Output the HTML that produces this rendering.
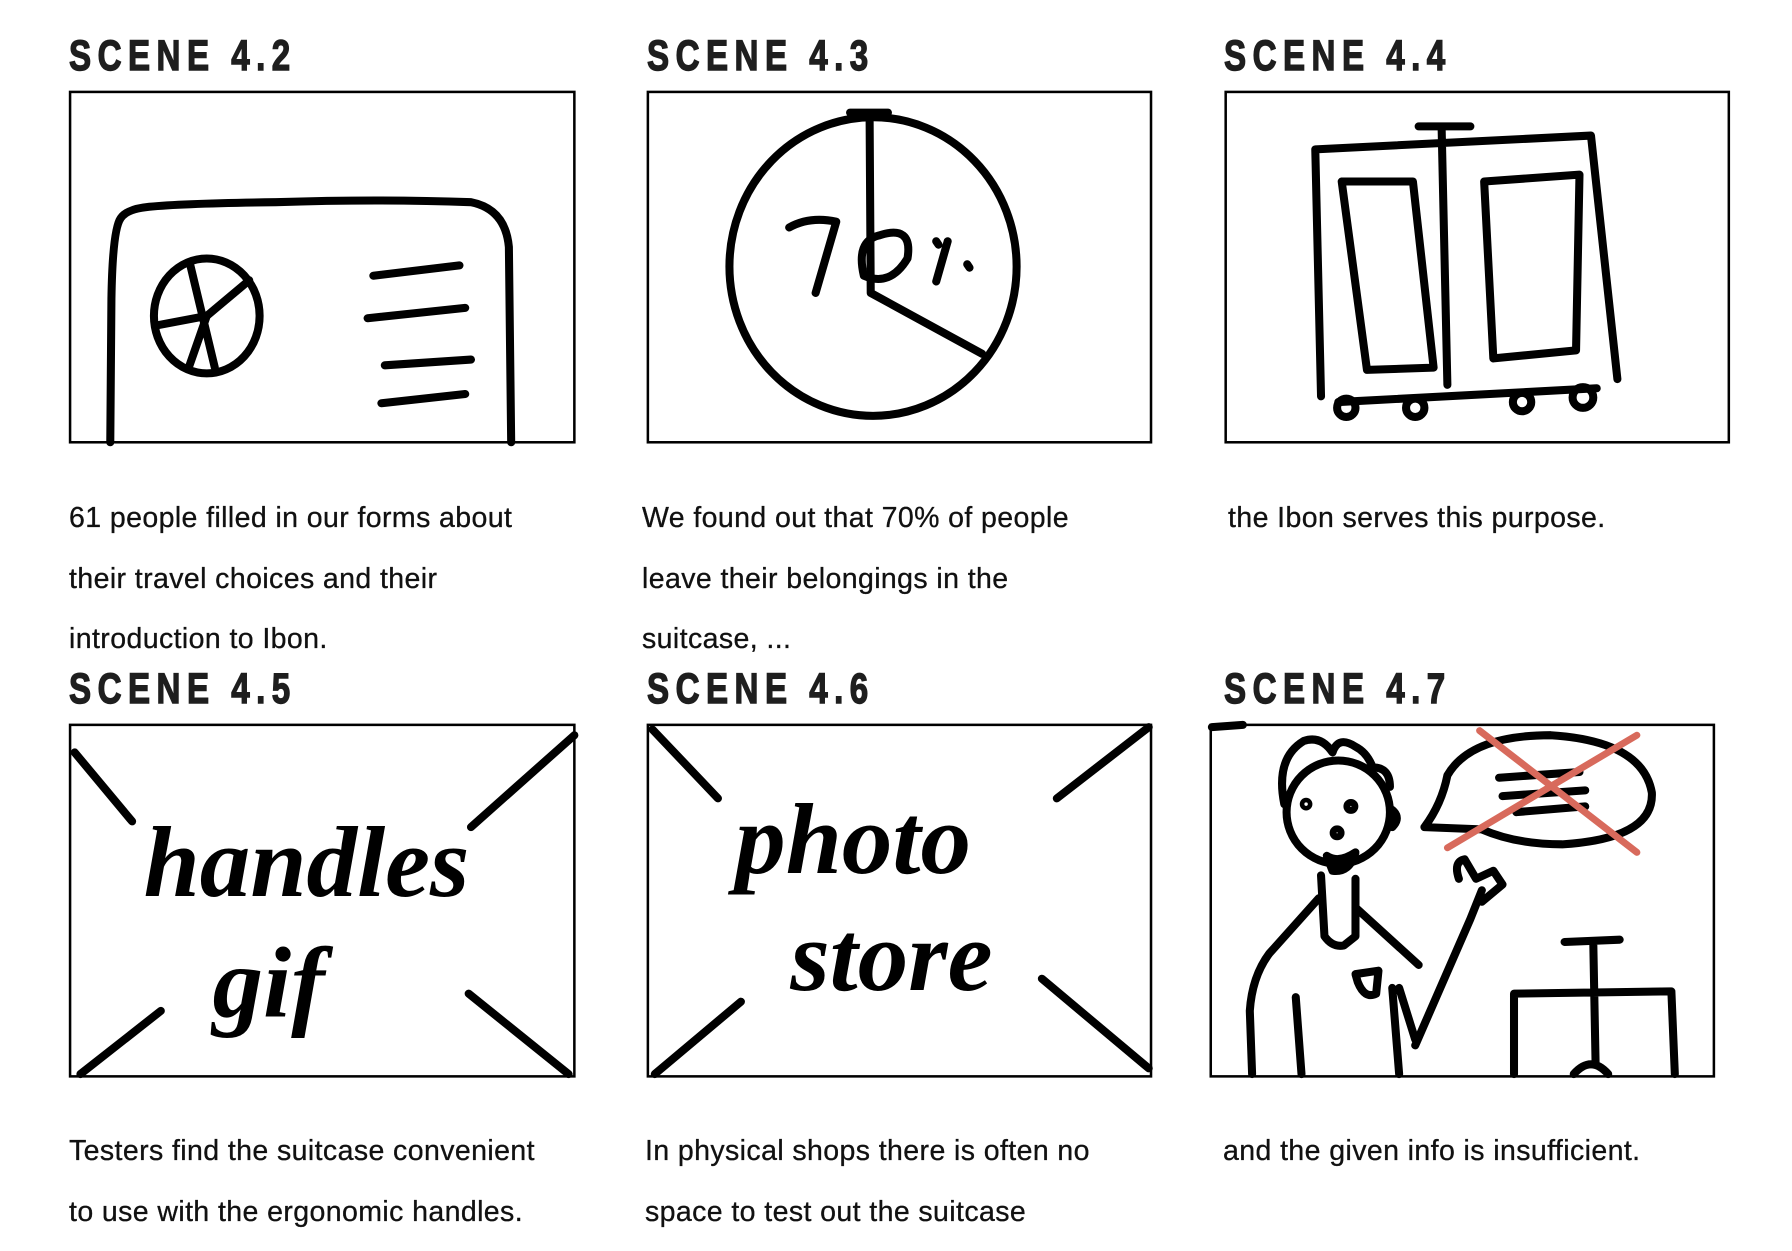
<!DOCTYPE html>
<html><head><meta charset="utf-8"><style>
html,body{margin:0;padding:0;background:#fff;}
body{width:1792px;height:1251px;position:relative;overflow:hidden;}
.h{position:absolute;font-family:"Liberation Sans",sans-serif;font-weight:bold;font-size:46px;letter-spacing:9px;color:#1e1e1e;line-height:1;transform:scale(0.72,0.92);transform-origin:0 0;-webkit-text-stroke:1.5px #1e1e1e;}
.t{position:absolute;font-family:"Liberation Sans",sans-serif;font-size:28.5px;letter-spacing:0.4px;color:#111;line-height:60.5px;-webkit-text-stroke:0.3px #111;}
svg{position:absolute;left:0;top:0;}
</style></head><body>
<div class="h" style="left:69px;top:34px">SCENE 4.2</div>
<div class="h" style="left:647px;top:34px">SCENE 4.3</div>
<div class="h" style="left:1224px;top:34px">SCENE 4.4</div>
<div class="h" style="left:69px;top:667px">SCENE 4.5</div>
<div class="h" style="left:647px;top:667px">SCENE 4.6</div>
<div class="h" style="left:1224px;top:667px">SCENE 4.7</div>

<div class="t" style="left:69px;top:488px">61 people filled in our forms about<br>their travel choices and their<br>introduction to Ibon.</div>
<div class="t" style="left:642px;top:488px">We found out that 70% of people<br>leave their belongings in the<br>suitcase, ...</div>
<div class="t" style="left:1228px;top:488px">the Ibon serves this purpose.</div>
<div class="t" style="left:69px;top:1121px">Testers find the suitcase convenient<br>to use with the ergonomic handles.</div>
<div class="t" style="left:645px;top:1121px">In physical shops there is often no<br>space to test out the suitcase</div>
<div class="t" style="left:1223px;top:1121px">and the given info is insufficient.</div>

<svg width="1792" height="1251" viewBox="0 0 1560 1089">
<g fill="none" stroke="#000" stroke-width="2.2">
<rect x="61" y="80" width="439" height="305"/>
<rect x="564" y="80" width="438" height="305"/>
<rect x="1067" y="80" width="438" height="305"/>
<rect x="61" y="631" width="439" height="306"/>
<rect x="564" y="631" width="438" height="306"/>
<rect x="1054" y="631" width="438" height="306"/>
</g>
<g fill="none" stroke="#000" stroke-width="7" stroke-linecap="round" stroke-linejoin="round">
<path d="M96 385 L97 260 Q98 200 105 190 Q110 182 130 180 Q160 177 240 176 Q330 173 410 176 Q440 182 443 215 L445 385"/>
<ellipse cx="180" cy="275" rx="46" ry="50"/>
<path d="M165 228 L187 320 M138 283 L180 275 L217 244 M180 275 L165 318"/>
<path d="M325 240 L400 231 M320 277 L405 268 M335 318 L410 313 M332 351 L405 343"/>
<ellipse cx="760" cy="232" rx="125" ry="130"/>
<path d="M740 98 L773 98 M757 98 L758 255 L855 308"/>
<path d="M687 198 Q705 188 728 193 L710 255 M765 205 Q745 210 752 240 Q775 250 790 225 Q795 195 765 205 M825 210 L815 245 M815 210 l2 3 M842 230 l2 3"/>
<path d="M1145 130 L1385 118 L1408 330 M1145 130 L1150 345 M1165 350 L1390 338 M1255 112 L1260 335 M1235 110 L1280 110"/>
<path d="M1168 158 L1230 158 L1248 320 L1190 322 Z M1292 158 L1375 152 L1372 305 L1300 312 Z"/>
<circle cx="1172" cy="355" r="8"/><circle cx="1232" cy="355" r="8"/><circle cx="1325" cy="350" r="8"/><circle cx="1378" cy="346" r="9"/>
<path d="M65 655 L115 715 M500 640 L410 720 M140 880 L70 935 M408 865 L495 935"/>
<path d="M568 635 L625 695 M1000 633 L920 695 M645 872 L570 935 M907 852 L1000 930"/>
<path d="M1055 633 L1082 631"/>
<circle cx="1165" cy="707" r="45"/>
<path d="M1118 700 Q1110 660 1135 645 Q1150 640 1160 655 Q1165 640 1180 650 Q1190 655 1195 668 Q1210 668 1210 685 M1212 705 Q1220 712 1212 720"/>
<circle cx="1137" cy="700" r="2"/><circle cx="1176" cy="702" r="3"/><circle cx="1164" cy="725" r="3"/>
<path d="M1155 745 Q1165 752 1180 742 Q1175 760 1160 758 Z"/>
<path d="M1150 762 L1153 815 Q1160 825 1170 823 L1180 815 L1180 765"/>
<path d="M1148 782 L1105 830 Q1090 850 1088 880 L1090 935 M1180 790 L1235 840 M1128 868 L1133 935 M1212 860 L1218 935 M1218 860 L1232 905 M1232 910 L1280 800 L1290 775 M1270 765 Q1265 750 1275 748 L1285 765 L1300 758 L1308 770 L1290 785"/>
<path d="M1180 848 L1200 845 L1198 865 Q1188 870 1182 855 Z"/>
<path d="M1240 720 Q1255 700 1260 675 Q1280 640 1350 640 Q1430 645 1438 690 Q1440 730 1360 735 Q1320 735 1290 722 L1240 720"/>
<path d="M1305 677 L1375 672 M1308 693 L1380 688 M1320 707 L1380 702"/>
<path d="M1387 820 L1389 925 M1362 820 L1410 818 M1318 935 L1318 865 L1455 863 L1458 935 M1370 935 Q1385 918 1400 935"/>
</g>
<g stroke="#d86a5c" stroke-width="6" stroke-linecap="round">
<path d="M1288 636 L1425 742 M1425 640 L1260 738"/>
</g>
<g font-family="'Liberation Serif',serif" font-style="italic" font-weight="bold" fill="#000">
<text x="125" y="780" font-size="88">handles</text>
<text x="185" y="885" font-size="88">gif</text>
<text x="640" y="760" font-size="88">photo</text>
<text x="688" y="862" font-size="88">store</text>
</g>
</svg>
</body></html>
